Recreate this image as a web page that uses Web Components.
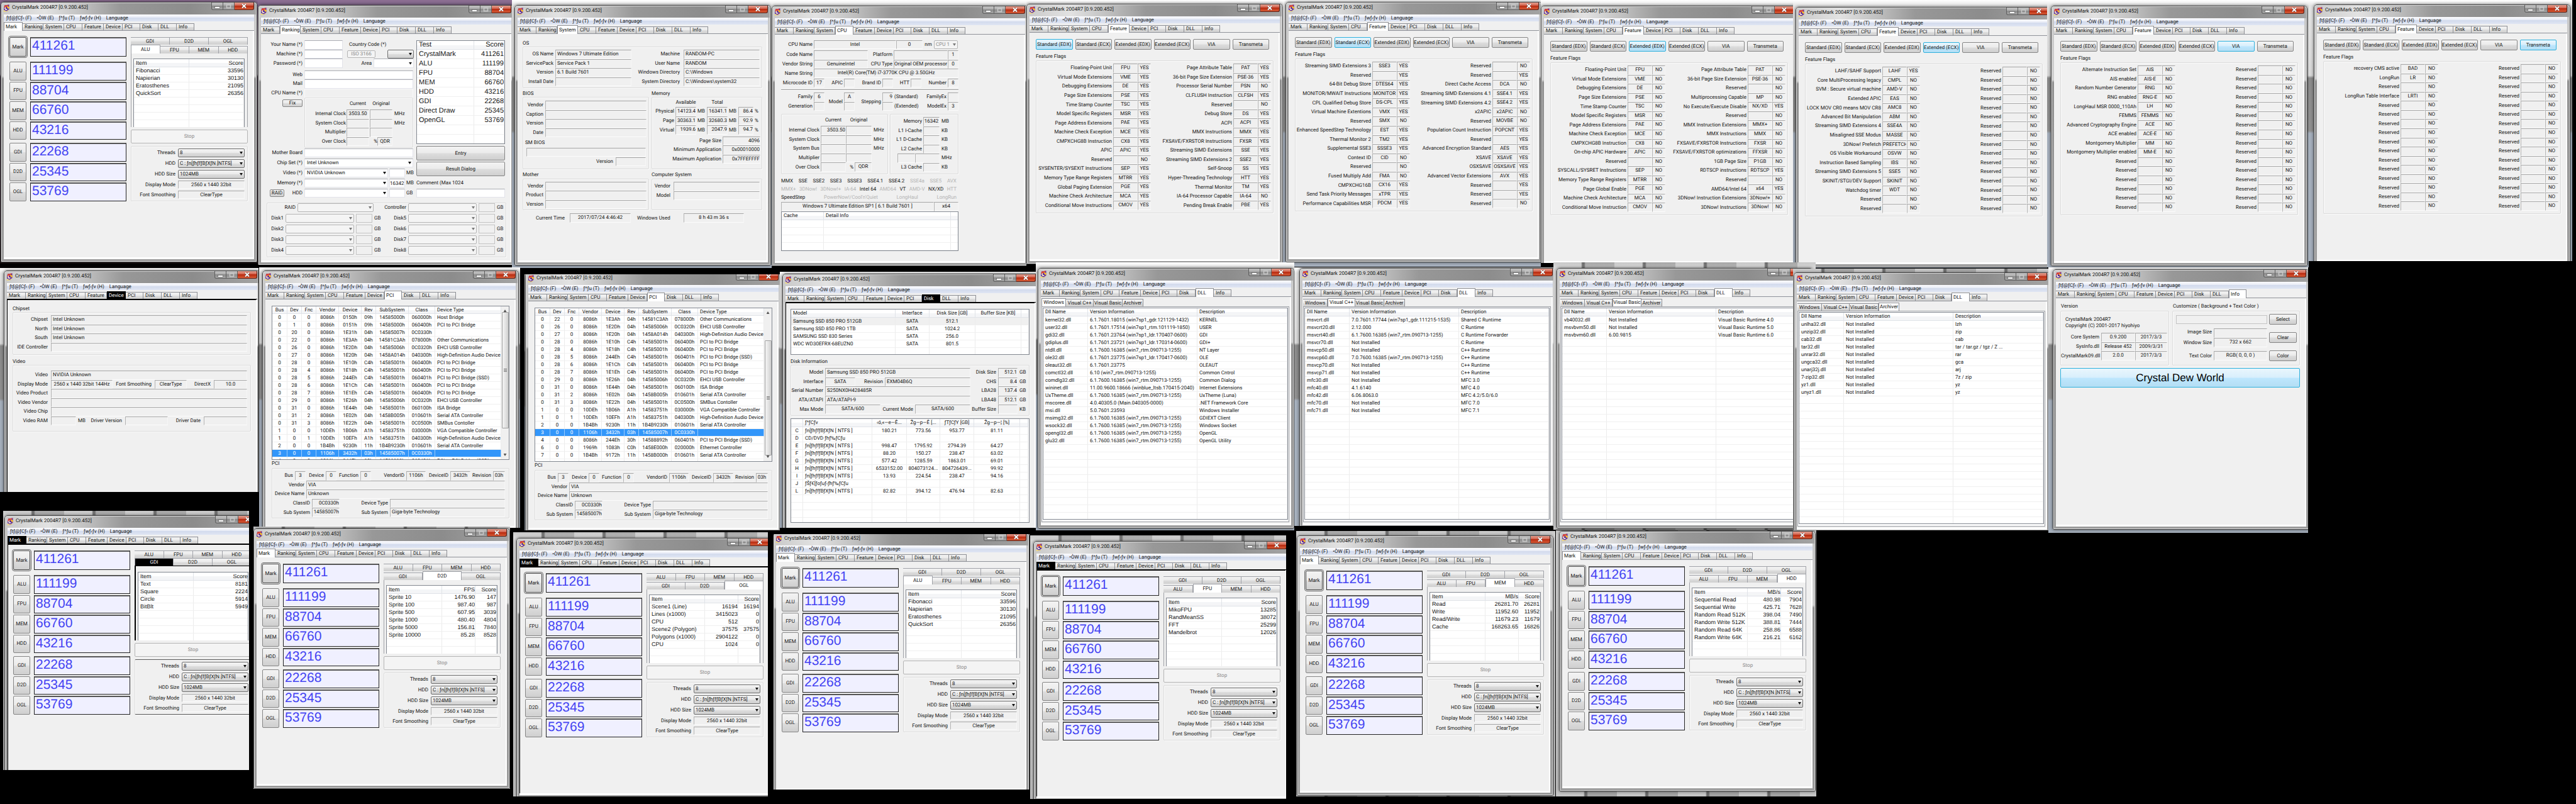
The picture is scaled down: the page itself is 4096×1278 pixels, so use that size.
<!DOCTYPE html>
<html lang="en">
<head>
<meta charset="utf-8">
<title>CrystalMark 2004R7</title>
<style>
html,body{margin:0;background:#000}
body{font:8px/12px Roboto,"Liberation Sans",sans-serif;color:#141414;text-rendering:geometricPrecision}
</style>
</head>
<body>
<crystal-desktop>
  <desk-shot class="purple" style="--x:0;--y:0;--w:410;--h:419;--dx:1;--dy:3"><cm-window tab="Mark"><mark-panel view="ALU"></mark-panel></cm-window></desk-shot>
  <desk-shot class="purple" style="--x:410;--y:0;--w:404;--h:421;--dx:0;--dy:8"><cm-window tab="Ranking"><ranking-panel></ranking-panel></cm-window></desk-shot>
  <desk-shot style="--x:814;--y:0;--w:413;--h:426;--dx:4;--dy:8"><cm-window tab="System"><system-panel></system-panel></cm-window></desk-shot>
  <desk-shot style="--x:1227;--y:0;--w:405;--h:423;--dx:0;--dy:9"><cm-window tab="CPU"><cpu-panel></cpu-panel></cm-window></desk-shot>
  <desk-shot style="--x:1632;--y:0;--w:408;--h:420;--dx:0;--dy:6"><cm-window tab="Feature"><feature-panel page="0"></feature-panel></cm-window></desk-shot>
  <desk-shot style="--x:2040;--y:0;--w:410;--h:424;--dx:4;--dy:3"><cm-window tab="Feature"><feature-panel page="1"></feature-panel></cm-window></desk-shot>
  <desk-shot style="--x:2450;--y:0;--w:401;--h:418;--dx:0;--dy:9"><cm-window tab="Feature"><feature-panel page="2"></feature-panel></cm-window></desk-shot>
  <desk-shot style="--x:2851;--y:0;--w:404;--h:426;--dx:4;--dy:11"><cm-window tab="Feature"><feature-panel page="3"></feature-panel></cm-window></desk-shot>
  <desk-shot style="--x:3255;--y:0;--w:416;--h:425;--dx:6;--dy:9"><cm-window tab="Feature"><feature-panel page="4"></feature-panel></cm-window></desk-shot>
  <desk-shot style="--x:3671;--y:0;--w:419;--h:415;--dx:8;--dy:7"><cm-window tab="Feature"><feature-panel page="5"></feature-panel></cm-window></desk-shot>

  <desk-shot style="--x:0;--y:426;--w:411;--h:356;--dx:6;--dy:4"><cm-window tab="Device" dark><device-panel></device-panel></cm-window></desk-shot>
  <desk-shot style="--x:412;--y:425;--w:415;--h:414;--dx:5;--dy:5"><cm-window tab="PCI"><pci-panel list="pci"></pci-panel></cm-window></desk-shot>
  <desk-shot style="--x:834;--y:436;--w:406;--h:407;--dx:1;--dy:-3"><cm-window tab="PCI"><pci-panel list="pciEnd"></pci-panel></cm-window></desk-shot>
  <desk-shot style="--x:1240;--y:432;--w:407;--h:407;--dx:4;--dy:3"><cm-window tab="Disk" dark><disk-panel></disk-panel></cm-window></desk-shot>
  <desk-shot style="--x:1647;--y:417;--w:411;--h:426;--dx:3;--dy:9"><cm-window tab="DLL"><dll-panel view="Windows"></dll-panel></cm-window></desk-shot>
  <desk-shot style="--x:2058;--y:425;--w:412;--h:411;--dx:8;--dy:1"><cm-window tab="DLL"><dll-panel view="Visual C++"></dll-panel></cm-window></desk-shot>
  <desk-shot class="noise" style="--x:2470;--y:417;--w:417;--h:425;--dx:5;--dy:9"><cm-window tab="DLL"><dll-panel view="Visual Basic"></dll-panel></cm-window></desk-shot>
  <desk-shot class="noise" style="--x:2851;--y:427;--w:406;--h:416;--dx:1;--dy:6"><cm-window tab="DLL"><dll-panel view="Archiver"></dll-panel></cm-window></desk-shot>
  <desk-shot style="--x:3257;--y:425;--w:413;--h:422;--dx:7;--dy:3"><cm-window tab="Info"><info-panel></info-panel></cm-window></desk-shot>

  <desk-shot class="noise" style="--x:5;--y:812;--w:391;--h:412;--dx:2;--dy:7"><cm-window tab="Mark" dark><mark-panel view="GDI" dark></mark-panel></cm-window></desk-shot>
  <desk-shot class="noise" style="--x:403;--y:837;--w:408;--h:417;--dx:0;--dy:3"><cm-window tab="Mark"><mark-panel view="D2D"></mark-panel></cm-window></desk-shot>
  <desk-shot class="noise" style="--x:816;--y:846;--w:405;--h:420;--dx:5;--dy:9"><cm-window tab="Mark" dark><mark-panel view="OGL"></mark-panel></cm-window></desk-shot>
  <desk-shot class="noise" style="--x:1230;--y:849;--w:407;--h:406;--dx:-1;--dy:-2"><cm-window tab="Mark"><mark-panel view="ALU"></mark-panel></cm-window></desk-shot>
  <desk-shot class="noise" style="--x:1638;--y:851;--w:407;--h:419;--dx:5;--dy:9"><cm-window tab="Mark" dark><mark-panel view="FPU"></mark-panel></cm-window></desk-shot>
  <desk-shot class="noise" style="--x:2061;--y:844;--w:412;--h:422;--dx:1;--dy:7"><cm-window tab="Mark"><mark-panel view="MEM"></mark-panel></cm-window></desk-shot>
  <desk-shot class="noise" style="--x:2474;--y:843;--w:414;--h:423;--dx:5;--dy:1"><cm-window tab="Mark"><mark-panel view="HDD"></mark-panel></cm-window></desk-shot>
</crystal-desktop>

<script>
/* ---------- shared styles ---------- */
const BASE = `
:host,*{box-sizing:border-box}
button,input,select{font:inherit;color:inherit;margin:0;padding:0;min-width:0;border-radius:0;outline-width:0;text-rendering:inherit}
button{background:linear-gradient(#f3f3f3,#ebebeb 48%,#dddddd 52%,#cfcfcf);border:1px solid #858585;border-radius:2px;text-align:center;line-height:10px;white-space:nowrap;overflow:hidden}
button.on{background:linear-gradient(#e9f6fd,#d8effc 48%,#bde6fd 52%,#b4def4);border-color:#2cb0dd}
button:disabled{background:#f4f4f4;border-color:#b5b5b5;color:#8a8a8a}
input{background:#fff;border:1px solid #e2e3ea;border-top-color:#abadb3;width:100%;height:100%;padding:0 2px}
input:disabled{background:#f0f0f0;border-color:#c4c4c4}
.sel{display:grid;align-items:center;min-width:0;height:100%}
.sel>*{grid-area:1/1}
.sel::after{content:"";grid-area:1/1;justify-self:end;margin-right:3px;width:5px;height:4px;background:#111;clip-path:polygon(0 0,100% 0,50% 100%);pointer-events:none}
select{appearance:none;width:100%;height:100%;border:1px solid #707070;border-radius:2px;padding:0 8px 0 2px;background:linear-gradient(#f3f3f3,#ebebeb 48%,#dddddd 52%,#cfcfcf)}
.sel.w select{background:#fff;border:1px solid #e2e3ea;border-top-color:#abadb3;border-radius:0;padding-left:3px}
.sel.d select{background:#f4f4f4;border-color:#b5b5b5;color:#8a8a8a;opacity:1}
.sel.d::after{background:#777}
.f{display:block;min-width:0;overflow:hidden;white-space:nowrap;border:1px solid #fcfcfc;border-top-color:#a6a6a6;border-left-color:#b4b4b4;border-right-color:#f6f6f6;padding:0 2px;line-height:12px}
.c{text-align:center;padding:0}
.r{text-align:right;padding:0}
.l{text-align:right;align-self:center;white-space:nowrap;min-width:0}
.n{align-self:center;white-space:nowrap;min-width:0}
.h{margin:0;font:inherit;line-height:10px;height:10px;white-space:nowrap}
.g{border:1px solid #dcdcdc;border-radius:2px;box-shadow:inset 1px 1px #fafafa,1px 1px #fafafa;min-width:0}
.rows{display:grid;grid-auto-rows:1fr}
.row{display:grid;min-width:0}
`;
class Panel extends HTMLElement{
  connectedCallback(){
    if(!this.shadowRoot) this.attachShadow({mode:'open'});
    this.shadowRoot.innerHTML = `<style>${BASE}:host{display:block}${this.css()}</style>${this.html()}`;
  }
  css(){return ''}
  html(){return '<slot></slot>'}
}
const f=(t='',c='')=>`<span class="f ${c}">${t}</span>`;
const l=t=>`<span class="l">${t}</span>`;
const n=t=>`<span class="n">${t}</span>`;

/* ---------- desktop ---------- */
customElements.define('crystal-desktop',class extends Panel{
  css(){return ':host{position:relative;min-height:100vh;background:#000;overflow:hidden}'}
});
customElements.define('desk-shot',class extends Panel{
  css(){return `
:host{position:absolute;left:calc(var(--x)*1px);top:calc(var(--y)*1px);width:calc(var(--w)*1px);height:calc(var(--h)*1px);overflow:hidden;
 background:linear-gradient(#fff,#e4e4e4 9px,#d9d9d9 120px,#8b8b8b 124px,#909090 208px,#a6b0bd 212px)}
:host(.purple){background:linear-gradient(#8d6f93,#7a6285 12px,#b7a9bd 60px,#cfcbd3 118px,#4d3d50 122px,#3d2c36 360px,#140d0e 415px)}
:host(.noise){background:repeating-linear-gradient(90deg,rgba(255,255,255,.5) 0 44px,rgba(70,70,70,.5) 46px 49px,rgba(200,200,200,.4) 51px 97px),linear-gradient(#8e8e8e,#b4b4b4 8px,#8b8b8b 100%)}
.in{display:flow-root;margin:calc(var(--dy)*1px) 0 0 calc(var(--dx)*1px)}`}
  html(){return '<div class="in"><slot></slot></div>'}
});

/* ---------- application window ---------- */
const TABS=[['Mark',30],['Ranking',33],['System',33],['CPU',29],['Feature',34],['Device',30],['PCI',28],['Disk',29],['DLL',29],['Info',28]];
customElements.define('cm-window',class extends Panel{
  css(){return `
:host{display:flex;flex-direction:column;width:408px;height:414px;padding:0 5px 5px;border-radius:5px 5px 2px 2px;
 background:linear-gradient(90deg,#c9c9c9 0,#e2e2e2 70px,#bdbdbd 135px,#989898 190px,#8c8c8c 300px,#a4a4a4 100%) 0 0/100% 20px no-repeat,linear-gradient(#c5c5c5,#cfcfcf 118px,#8e8e8e 122px,#9b9b9b);
 box-shadow:inset 0 0 0 1px #454545,inset 0 0 0 2px #dcdcdc,0 0 5px rgba(0,0,0,.6);overflow:hidden}
header{display:flex;height:20px;flex:none;align-items:flex-start}
header svg.ic{width:11px;height:12px;margin:4px 2px 0 -1px;flex:none}
h1{flex:1;margin:3px 0 0 1px;font-size:8px;font-weight:400;line-height:12px;white-space:nowrap;color:#101010}
.cap{display:flex;margin-top:1px}
.cap button{height:12px;border:1px solid #5e5e5e;border-top:0;border-radius:0;display:grid;place-items:center;background:linear-gradient(#c3c3c3,#adadad 45%,#8b8b8b 50%,#a5a5a5)}
.cap .a{width:19px;border-bottom-left-radius:3px}.cap .b{width:18px;border-left:0}
.cap .x{width:31px;border-left:0;border-color:#5b2017;border-bottom-right-radius:3px;background:linear-gradient(#e3a091,#d2604a 45%,#b92c12 50%,#d75a35)}
.cap svg{display:block}
nav{display:flex;gap:8px;flex:none;height:11px;padding-left:4px;background:linear-gradient(#fdfdff,#e6eaf5 45%,#d3dbed 50%,#dfe5f3)}
nav button{background:none;border:0;border-radius:0;line-height:11px;overflow:visible}
.tabs{display:flex;align-items:flex-end;flex:none;height:15px;background:#f0f0f0;border-bottom:1px solid #8f9299}
.tabs button{height:11px;border:1px solid #8c8e94;border-left-width:0;border-bottom:0;border-radius:0;text-align:left;padding:0 0 0 3px;line-height:10px;background:linear-gradient(#f2f2f2,#ebebeb 48%,#dddddd 52%,#cfcfcf)}
.tabs button[aria-selected=true]{height:14px;margin-bottom:-1px;background:#fff;line-height:11px;border-left-width:1px;padding-left:2px}
:host([dark]) .tabs{border-bottom:1px solid #000}
:host([dark]) .tabs button[aria-selected=true]{background:#000;color:#fff;border-color:#000;height:12px;margin:0}
main{flex:1;min-height:0;background:#f0f0f0;border:solid #fff;border-width:0 2px 3px 0;overflow:hidden}
:host([dark]) main{box-shadow:inset 1px 1px #000}`}
  html(){
    const cur=this.getAttribute('tab');
    return `<header>
<svg class="ic" viewBox="0 0 22 24"><path d="M4 3 19 1v15l-9 5-8-4z" fill="#4b1fa8"/><path d="M4 3 19 1l-7 7-9 4z" fill="#d8463a"/><path d="M2 17c2 4 8 6 12 5l4-7-6-5 1-5 7 3-2 9-8 5z" fill="#f4b92e"/><path d="M8 8a5 5 0 1 0 6 7l-3-1a2 2 0 1 1-2-4z" fill="#fff4c4"/><path d="m1 19 5 1 4 4H1z" fill="#e8d48a"/></svg>
<h1>CrystalMark 2004R7 [0.9.200.452]</h1>
<div class="cap"><button class="a" aria-label="Minimize"><svg width="9" height="8"><rect x=".5" y="4.500" width="8" height="3" fill="#fff" stroke="#555" stroke-width=".6"/></svg></button><button class="b" aria-label="Maximize"><svg width="9" height="8"><rect x="1.500" y="1.500" width="6" height="5" fill="none" stroke="#c9c9c9" stroke-width="1.500"/></svg></button><button class="x" aria-label="Close"><svg width="10" height="9"><path d="m2 1.500 6 6m0-6-6 6" stroke="#5d3a35" stroke-width="3"/><path d="m2 1.500 6 6m0-6-6 6" stroke="#fff" stroke-width="1.800"/></svg></button></div></header>
<nav>${['ƒtƒ@ƒCƒ‹ (F)','•ÒW (E)','ƒ^ƒu (T)','ƒwƒ‹ƒv (H)','Language'].map(t=>`<button>${t}</button>`).join('')}</nav>
<div class="tabs" role="tablist">${TABS.map(([t,w])=>`<button role="tab" aria-selected="${t===cur}" style="width:${w}px">${t}</button>`).join('')}</div>
<main><slot></slot></main>`}
});

/* ---------- list view ---------- */
const HD='ƒn[ƒhƒfƒBƒXƒN [ NTFS ]', NI='Not Installed', W7='6.1.7600.16385 (win7_rtm.090713-1255)';
const PCI=`0|0|0|8086h|0150h|09h|14585000h|060000h|Host Bridge
0|1|0|8086h|0151h|09h|14585000h|060400h|PCI to PCI Bridge
0|20|0|8086h|1E31h|04h|14585007h|0C0330h|
0|22|0|8086h|1E3Ah|04h|14581C3Ah|078000h|Other Communications
0|26|0|8086h|1E2Dh|04h|14585006h|0C0320h|EHCI USB Controller
0|27|0|8086h|1E20h|04h|1458A014h|040300h|High-Definition Audio Device
0|28|0|8086h|1E10h|C4h|14585001h|060400h|PCI to PCI Bridge
0|28|4|8086h|1E18h|C4h|14585001h|060400h|PCI to PCI Bridge
0|28|5|8086h|244Eh|C4h|14585001h|060401h|PCI to PCI Bridge (SSD)
0|28|6|8086h|1E1Ch|C4h|14585001h|060400h|PCI to PCI Bridge
0|28|7|8086h|1E1Eh|C4h|14585001h|060400h|PCI to PCI Bridge
0|29|0|8086h|1E26h|04h|14585006h|0C0320h|EHCI USB Controller
0|31|0|8086h|1E44h|04h|14585001h|060100h|ISA Bridge
0|31|2|8086h|1E02h|04h|1458B005h|010601h|Serial ATA Controller
0|31|3|8086h|1E22h|04h|14585001h|0C0500h|SMBus Contoller
1|0|0|10DEh|1B06h|A1h|14583751h|030000h|VGA Compatible Controller
1|0|1|10DEh|10EFh|A1h|14583751h|040300h|High-Definition Audio Device
2|0|0|1B4Bh|9230h|11h|1B4B9230h|010601h|Serial ATA Controller
3|0|0|1106h|3432h|03h|14585007h|0C0330h|
4|0|0|8086h|244Eh|30h|14588892h|060401h|PCI to PCI Bridge (SSD)
6|0|0|1969h|1083h|C0h|1458E000h|020000h|Ethernet Controller
7|0|0|1B4Bh|9172h|11h|1458B000h|010601h|Serial ATA Controller`.split('\n').map(r=>r.split('|'));
const two={cols:[88,87],al:'lr',fs:9,n:8}, three={cols:[88,53,34],al:'lrr',fs:9,n:8};
const pciBase={cols:[24,23,23,36,36,23,52,42,105],al:'ccccccccl',hh:12,head:['Bus','Dev','Fnc','Vendor','Device','Rev','SubSystem','Class','Device Type']};
const dll={cols:[71,174,143],al:'lll',head:['Dll Name','Version Information','Description'],n:28};
const split=(s,k='|')=>s.trim().split('\n').map(r=>r.split(k));
const LISTS={
ALU:{...two,head:['Item','Score'],rows:split('Fibonacci|33596\nNapierian|30130\nEratosthenes|21095\nQuickSort|26356')},
FPU:{...two,head:['Item','Score'],rows:split('MikoFPU|13285\nRandMeanSS|38072\nFFT|25299\nMandelbrot|12026')},
GDI:{...two,head:['Item','Score'],rows:split('Text|8181\nSquare|2224\nCircle|5914\nBitBlt|5949')},
D2D:{...three,head:['Item','FPS','Score'],rows:split('Sprite   10|1476.90|147\nSprite  100|987.40|987\nSprite  500|607.95|3039\nSprite  1000|480.40|4804\nSprite  5000|156.81|7840\nSprite 10000|85.28|8528')},
OGL:{...three,head:['Item','','Score'],rows:split('Scene1 (Line)|16194|16194\nLines (x1000)|3415023|0\nCPU|512|0\nScene2 (Polygon)|37575|37575\nPolygons (x1000)|2904122|0\nCPU|1024|0')},
MEM:{...three,head:['Item','MB/s','Score'],rows:split('Read|26281.70|26281\nWrite|11952.60|11952\nRead/Write|11679.23|11679\nCache|168263.65|16826')},
HDD:{...three,head:['Item','MB/s','Score'],rows:split('Sequential Read|480.98|7904\nSequential Write|425.71|7628\nRandom Read 512K|398.04|7490\nRandom Write 512K|388.81|7444\nRandom Read 64K|258.86|6588\nRandom Write 64K|216.21|6162')},
rank:{cols:[91,48],al:'lr',fs:11,n:11,tall:1,hh:14,head:['Test','Score'],rows:split('CrystalMark|411261\nALU|111199\nFPU|88704\nMEM|66760\nHDD|43216\nGDI|22268\nDirect Draw|25345\nOpenGL|53769')},
cache:{cols:[67,202,12],al:'lll',n:5,head:['Cache','Detail Info',''],rows:[]},
pci:{...pciBase,rows:PCI.slice(0,20),sel:18,scroll:'0 0 40px',n:20},
pciEnd:{...pciBase,rows:PCI.slice(3),sel:15,scroll:'42px 0 0',n:20},
disk:{cols:[166,54,73,73,12],al:'lcccl',n:6,hot:0,head:['Model','Interface','Disk Size [GB]','Buffer Size [KB]',''],rows:split('Samsung SSD 850 PRO 512GB|SATA|512.1||\nSamsung SSD 850 PRO 1TB|SATA|1024.2||\nSAMSUNG SSD 830 Series|SATA|256.0||\nWDC WD30EFRX-68EUZN0|SATA|801.5||')},
drives:{cols:[19,110,55,53,54,73,13],al:'clccccl',n:13,head:['','ƒ^ƒCƒv','‹ó‚«—e—Ê...','Žg—p—Ê [...','ƒTƒCƒY [GB]','Žg—p—¦ [%]',''],rows:[
['C',HD,'180.21','773.56','953.77','81.11',''],['D','CD/DVD ƒhƒ‰ƒCƒu','','','','',''],['E',HD,'998.47','1795.92','2794.39','64.27',''],['F',HD,'88.20','150.27','238.47','63.02',''],['G',HD,'577.42','1285.59','1863.01','69.01',''],['H',HD,'6533152.00','804073124...','804726439...','99.92',''],['I',HD,'13.93','224.54','238.47','94.16',''],['J','ƒŠƒ€[ƒoƒuƒ‹ƒhƒ‰ƒCƒu','','','','',''],['L',HD,'82.82','394.12','476.94','82.63','']]},
'Windows':{...dll,rows:[['kernel32.dll','6.1.7601.18015 (win7sp1_gdr.121129-1432)','KERNEL'],['user32.dll','6.1.7601.17514 (win7sp1_rtm.101119-1850)','USER'],['gdi32.dll','6.1.7601.23764 (win7sp1_ldr.170407-0600)','GDI'],['gdiplus.dll','6.1.7601.23721 (win7sp1_ldr.170314-0600)','GDI+'],['ntdll.dll',W7,'NT Layer'],['ole32.dll','6.1.7601.23775 (win7sp1_ldr.170417-0600)','OLE'],['oleaut32.dll','6.1.7601.23775','OLEAUT'],['comctl32.dll','6.10 (win7_rtm.090713-1255)','Common Cntrol'],['comdlg32.dll',W7,'Common Dialog'],['wininet.dll','11.00.9600.18666 (winblue_ltsb.170415-2040)','Internet Extensions'],['UxTheme.dll',W7,'UxTheme (Luna)'],['mscoree.dll','4.0.40305.0 (Main.040305-0000)','.NET Framework Core'],['msi.dll','5.0.7601.23593','Windows Installer'],['msimg32.dll',W7,'GDIEXT Client'],['wsock32.dll',W7,'Windows Socket'],['opengl32.dll',W7,'OpenGL'],['glu32.dll',W7,'OpenGL Utility']]},
'Visual C++':{...dll,rows:[['msvcrt.dll','7.0.7601.17744 (win7sp1_gdr.111215-1535)','Shared C Runtime'],['msvcrt20.dll','2.12.000','C Runtime'],['msvcrt40.dll',W7,'C Runtime Forwarder'],['msvcr70.dll',NI,'C Runtime'],['msvcp50.dll',NI,'C++ Runtime'],['msvcp60.dll','7.0.7600.16385 (win7_rtm.090713-1255)','C++ Runtime'],['msvcp70.dll',NI,'C++ Runtime'],['msvcp71.dll',NI,'C++ Runtime'],['mfc30.dll',NI,'MFC 3.0'],['mfc40.dll','4.1.6140','MFC 4.0'],['mfc42.dll','6.06.8063.0','MFC 4.2/5.0/6.0'],['mfc70.dll',NI,'MFC 7.0'],['mfc71.dll',NI,'MFC 7.1']]},
'Visual Basic':{...dll,rows:[['vb40032.dll',NI,'Visual Basic Runtime 4.0'],['msvbvm50.dll',NI,'Visual Basic Runtime 5.0'],['msvbvm60.dll','6.00.9815','Visual Basic Runtime 6.0']]},
'Archiver':{...dll,rows:[['unlha32.dll','lzh'],['unzip32.dll','zip'],['cab32.dll','cab'],['tar32.dll','tar / tar.gz / tgz / Z ...'],['unrar32.dll','rar'],['ungca32.dll','gca'],['unarj32j.dll','arj'],['7-zip32.dll','7z / zip'],['yz1.dll','yz'],['unyz1.dll','yz']].map(r=>[r[0],NI,r[1]])}
};
customElements.define('list-view',class extends Panel{
  get m(){return LISTS[this.getAttribute('src')]}
  css(){const m=this.m,hh=m.hh||13;return `
:host{display:flex;overflow:hidden;background:#fff;border:1px solid #828790;min-height:0;min-width:0}
.v{flex:1;overflow:hidden;min-width:0}
table{border-collapse:separate;border-spacing:0;table-layout:fixed;width:${m.cols.reduce((a,b)=>a+b)}px;font-family:${m.fs?'"Liberation Sans",':''}Roboto,sans-serif;font-size:${m.fs||8}px}
th,td{padding:0 4px 0 3px;height:${m.tall?15:12}px;line-height:${m.tall?14:11}px;font-weight:400;white-space:pre;overflow:hidden;border-right:1px solid #ececec;border-bottom:1px solid #f0f0f0}
th{height:${hh}px;background:linear-gradient(#fff 50%,#f4f5f7 52%);border-color:#e0e3e8;line-height:${hh-1}px}
.l{text-align:left}.r{text-align:right}.c{text-align:center;padding:0}
.s td{background:#3296fa;color:#fff;border-right-color:#9ccbfb}
.o td{background:#f0f0f0}
.b{flex:none;width:12px;background:#f0f0f0;display:flex;flex-direction:column;align-items:center;justify-content:space-between;padding:5px 0}
.b i{width:5px;height:4px;background:#555;clip-path:polygon(50% 0,100% 100%,0 100%)}
.b i:last-child{clip-path:polygon(0 0,100% 0,50% 100%)}
.b b{flex:1;width:11px;margin:${m.scroll||0};border:1px solid #a0a0a0;border-radius:1px;background:linear-gradient(90deg,#f3f3f3,#e4e4e4 50%,#cfcfcf);display:grid;place-items:center}
.b b::after{content:"";width:5px;height:5px;background:repeating-linear-gradient(#777 0 1px,transparent 1px 2px)}`}
  html(){const m=this.m,a=m.al,rows=[...m.rows];while(rows.length<m.n)rows.push(m.cols.map(()=>''));
    return `<div class="v"><table><colgroup>${m.cols.map(w=>`<col style="width:${w}px">`).join('')}</colgroup><thead><tr>${m.head.map((t,i)=>`<th class="${a[i]}">${t}</th>`).join('')}</tr></thead><tbody>${rows.map((r,k)=>`<tr class="${k===m.sel?'s':k===m.hot?'o':''}">${r.map((t,i)=>`<td class="${a[i]}">${t}</td>`).join('')}</tr>`).join('')}</tbody></table></div>${m.scroll?'<div class="b"><i></i><b></b><i></i></div>':''}`}
});

/* ---------- Mark ---------- */
customElements.define('mark-panel',class extends Panel{
  css(){return `
:host{display:grid;grid-template-columns:186px 186px;gap:7px;padding:10px 0 0 9px;align-items:start}
.grp{display:grid;grid-auto-rows:1fr;gap:2px}
.one{height:31px;margin-bottom:8px}.four{height:124px;margin-bottom:5px}.three{height:93px}
.sc{display:grid;grid-template-columns:27px 153px;gap:6px}
.one button{border-color:#444;outline:1px solid #666;outline-offset:1px}
output{display:block;background:#f0f0ff;border:1px solid #222;border-top:2px solid #555;color:#4343f2;font:21px/24px "Liberation Sans",sans-serif;padding-left:2px;overflow:hidden}
.tabs{display:grid;grid-auto-flow:column;grid-auto-columns:1fr;height:12px;align-items:end}
.tabs button{height:12px;border:1px solid #a0a2a8;border-bottom:0;border-left-width:0;border-radius:0}
.tabs button[aria-selected=true]{height:14px;background:#fff;border-left-width:1px;line-height:12px}
:host([dark]) .tabs button[aria-selected=true]{background:#000;color:#fff;height:12px}
.pg{border:1px solid #a0a2a8;border-bottom:0;padding:9px 4px 0 3px;height:119px;margin-bottom:4px}
:host([dark]) .pg{border-top:1px solid #000;border-left:2px solid #000}
list-view{height:109px;border-bottom:0}
.stop{width:100%;height:22px;margin-bottom:4px;display:block}
.g{height:88px;padding:3px 4px 3px 0;display:grid;grid-template-columns:69px 106px;grid-template-rows:14px 14px 14px 13px 13px;justify-content:end;row-gap:3px;column-gap:4px}
:host([dark]) .g{border-color:#555 #ddd}`}
  html(){
    const v=this.getAttribute('view'),A=['ALU','FPU','MEM','HDD'],B=['GDI','D2D','OGL'];
    const sc=([k,s])=>`<div class="sc"><button id="b${k}">${k}</button><output aria-labelledby="b${k}">${s}</output></div>`;
    const tabs=x=>`<div class="tabs" role="tablist">${x.map(t=>`<button role="tab" aria-selected="${t===v}">${t}</button>`).join('')}</div>`;
    return `<div><div class="grp one">${sc(['Mark',411261])}</div><div class="grp four">${[['ALU',111199],['FPU',88704],['MEM',66760],['HDD',43216]].map(sc).join('')}</div><div class="grp three">${[['GDI',22268],['D2D',25345],['OGL',53769]].map(sc).join('')}</div></div>
<div>${A.includes(v)?tabs(B)+tabs(A):tabs(A)+tabs(B)}<div class="pg"><list-view src="${v}"></list-view></div>
<button class="stop" disabled>Stop</button>
<div class="g"><label class="l" for="th">Threads</label><span class="sel"><select id="th"><option>8</option></select></span>
<label class="l" for="hd">HDD</label><span class="sel"><select id="hd"><option>C : ƒn[ƒhƒfƒBƒXƒN [NTFS]</option></select></span>
<label class="l" for="hs">HDD Size</label><span class="sel"><select id="hs"><option>1024MB</option></select></span>
${l('Display Mode')}${f('2560 x 1440 32bit','c')}${l('Font Smoothing')}${f('ClearType','c')}</div></div>`}
});

/* ---------- Ranking ---------- */
customElements.define('ranking-panel',class extends Panel{
  css(){return `
:host{padding:10px 0 0 9px}
.top{display:grid;grid-template-columns:233px 141px;gap:5px;height:258px}
.who{display:grid;grid-template-columns:57px 61px 110px;column-gap:3px;grid-template-rows:repeat(3,1fr);height:44px;margin-bottom:4px}
.cc{display:flex;align-items:center;min-width:0}
.cc label{white-space:nowrap}
.cc .iso{width:45px;height:12px;margin-left:4px;padding:0}
.cc .sel{width:42px;margin-left:auto}
.cc .area{width:64px}
.web{display:grid;grid-template-columns:57px 173px;column-gap:3px;grid-auto-rows:1fr;height:43px}
.web .f{border-color:#f8f8f8}
.clk{display:grid;grid-template-columns:57px 173px;column-gap:3px;height:80px;margin-bottom:1px}
.clk button{width:32px;height:12px;justify-self:end;margin-top:3px}
.clk .g{display:grid;grid-template-columns:65px 36px 36px 1fr;grid-template-rows:18px;grid-auto-rows:1fr;column-gap:1px;padding-bottom:2px}
.oc{display:grid;grid-template-columns:1fr 24px}
.hw{display:grid;grid-template-columns:57px 173px;column-gap:3px;grid-auto-rows:14px;row-gap:2px}
.hw .v{display:grid;grid-template-columns:133px 25px 11px;column-gap:2px}
.hw .v input{padding:0}
.raid{display:flex;justify-content:space-between;padding-left:5px;align-items:center}
.raid button{width:23px;height:12px}
.rt{display:flex;flex-direction:column}
.rt list-view{height:165px;margin-bottom:3px}
.rt button{height:23px;margin-bottom:2px;flex:none}
.rt label{line-height:18px;height:18px;flex:none;white-space:nowrap}
.rt input{height:14px;flex:none}
.arr{width:381px;height:87px;display:grid;grid-auto-rows:14px;row-gap:3px}
.arr .row{column-gap:3px}
.e1{grid-template-columns:45px 121px 1fr 109px 26px 14px}
.e2{grid-template-columns:26px 109px 26px 14px 1fr 109px 26px 14px}`}
  html(){
    const s=(id,o='',c='w')=>`<span class="sel ${c}"><select id="${id}" ${c==='d'?'disabled':''}><option>${o}</option></select></span>`;
    const lb=(id,t)=>`<label class="l" for="${id}">${t}</label>`;
    const di=t=>`<input disabled aria-label="${t}">`;
    return `<div class="top"><div>
<div class="who">${lb('nm','Your Name (*)')}<input id="nm"><div class="cc" style="padding-left:7px"><label for="iso">Country Code (*)</label></div>
${lb('mc','Machine (*)')}<input id="mc"><div class="cc"><button class="iso" disabled>ISO 3166</button><span class="sel"><select id="iso"><option></option></select></span></div>
${lb('pw','Password (*)')}<input id="pw"><div class="cc"><label class="l" for="ar" style="flex:1;margin-right:3px">Area</label><span class="sel w area"><select id="ar"><option></option></select></span></div></div>
<div class="web">${lb('wb','Web')}<input id="wb">${lb('ml','Mail')}<input id="ml">${l('CPU Name (*)')}${f()}</div>
<div class="clk"><button>Fix</button><div class="g"><span></span><span class="n" style="text-align:center">Current</span><span class="n" style="text-align:center">Original</span><span></span>
${l('Internal Clock')}${f('3503.50','c')}${f()}${n('&nbsp;MHz')}${l('System Clock')}${f()}${f()}${n('&nbsp;MHz')}${l('Multiplier')}${f()}${f()}<span></span>${l('Over Clock')}${f()}<span class="oc">${l('%')}${f('QDR','c')}</span><span></span></div></div>
<div class="hw">${lb('mb','Mother Board')}<input id="mb">${lb('cs','Chip Set (*)')}${s('cs','Intel Unknown')}
${lb('vi','Video (*)')}<div class="v">${s('vi','NVIDIA Unknown')}<input aria-label="Video MB">${n('MB')}</div>
${lb('me','Memory (*)')}<div class="v">${s('me')}<input aria-label="Memory MB" value="16342">${n('MB')}</div>
<div class="raid"><button>RAID</button>${lb('hdd','HDD')}</div><div class="v">${s('hdd')}<input aria-label="HDD GB">${n('GB')}</div></div></div>
<div class="rt"><list-view src="rank"></list-view><button>Entry</button><button>Result Dialog</button><label for="cm">Comment (Max 1024</label><input id="cm"></div></div>
<div class="g arr"><div class="row e1">${lb('rd','RAID')}${s('rd','','d')}${lb('ct','Controller')}${s('ct','','d')}${di('GB')}${n('GB')}</div>
${[1,2,3,4].map(i=>`<div class="row e2">${lb('k'+i,'Disk'+i)}${s('k'+i,'','d')}${di('GB')}${n('GB')}${lb('k'+(i+4),'Disk'+(i+4))}${s('k'+(i+4),'','d')}${di('GB')}${n('GB')}</div>`).join('')}</div>`}
});

/* ---------- System ---------- */
customElements.define('system-panel',class extends Panel{
  css(){return `
:host{padding:10px 0 0 8px;width:389px}
.os{height:66px;padding-top:4px;margin-bottom:4px}
.os .rows{height:58px;grid-template-columns:48px 121px 77px 121px;column-gap:3px}
.os .l:nth-child(4n+3){padding-right:3px}
.two{display:grid;grid-template-columns:201px 176px;column-gap:4px;margin-bottom:4px}
.mid .g{height:115px}.low .g{height:50px;padding-top:4px;margin-top:1px}
.bi .rows{height:58px;margin-top:5px;grid-template-columns:32px 161px;column-gap:3px}
.sm{height:17px;line-height:17px;padding-left:3px}
.smf{height:14px;margin:0 4px 1px 5px}
.ve{display:grid;grid-template-columns:1fr 48px;gap:4px;height:14px;margin-right:4px}
.me .hd{height:15px;display:grid;grid-template-columns:35px 33px 13px 33px;gap:2px;text-align:center;line-height:16px}
.me .mm{height:44px;grid-template-columns:35px 33px 13px 33px 13px 24px 1fr;column-gap:2px}
.me .pp{height:43px;margin-top:3px;grid-template-columns:110px 60px;column-gap:2px}
.low .mo{height:43px;grid-template-columns:32px 161px;column-gap:3px}
.low .co{height:29px;grid-template-columns:29px 137px;column-gap:5px}
.tm{display:grid;grid-template-columns:67px 97px 68px 96px;gap:8px;height:15px;margin-top:5px}`}
  html(){return `<h2 class="h">OS</h2><div class="g os"><div class="rows">${l('OS Name')}${f('Windows 7 Ultimate Edition')}${l('Machine')}${f('RANDOM-PC')}${l('ServicePack')}${f('Service Pack 1')}${l('User Name')}${f('RANDOM')}${l('Version')}${f('6.1 Build 7601')}${l('Windows Directory')}${f('C:\\Windows')}${l('Install Date')}${f()}${l('System Directory')}${f('C:\\Windows\\system32')}</div></div>
<div class="two mid"><div class="bi"><h2 class="h">BIOS</h2><div class="g"><div class="rows">${['Vendor','Caption','Version','Date'].map(t=>l(t)+f()).join('')}</div><div class="sm">SM BIOS</div><div class="f smf"></div><div class="ve">${l('Version')}${f()}</div></div></div>
<div class="me"><h2 class="h">Memory</h2><div class="g"><div class="hd"><span></span><span>Available</span><span></span><span>Total</span></div><div class="rows mm">${[['Physical','14123.4','16341.1','86.4'],['Page','30363.1','32680.3','92.9'],['Virtual','1939.6','2047.9','94.7']].map(r=>l(r[0])+f(r[1],'r')+n('MB')+f(r[2],'r')+n('MB')+f(r[3],'r')+n('%')).join('')}</div><div class="rows pp">${l('Page Size')}${f('4096','r')}${l('Minimum Application')}${f('0x00010000','r')}${l('Maximum Application')}${f('0x7FFEFFFF','r')}</div></div></div></div>
<div class="two low"><div><h2 class="h">Mother</h2><div class="g"><div class="rows mo">${['Vendor','Product','Version'].map(t=>l(t)+f()).join('')}</div></div></div><div><h2 class="h">Computer System</h2><div class="g"><div class="rows co">${['Vendor','Model'].map(t=>l(t)+f()).join('')}</div></div></div></div>
<div class="tm">${l('Current Time')}${f('2017/07/24 4:46:42','c')}${n('&nbsp;Windows Used')}${f('8 h 43 m 36 s','c')}</div>`}
});

/* ---------- CPU ---------- */
customElements.define('cpu-panel',class extends Panel{
  css(){return `
:host{padding:9px 0 0 10px;width:292px}
.l{padding-right:2px}
.a{grid-template-columns:52px 131px 42px 18px 38px;height:14px;margin-bottom:2px}
.a .n{text-align:center}
.three{height:44px;margin-bottom:1px}
.b{grid-template-columns:52px 86px 41px 86px 17px}.c4{grid-template-columns:52px 1fr}
.e{grid-template-columns:52px 17px 31px 17px 44px 17px 28px 17px 42px 17px;height:14px}
hr{border:0;border-top:1px solid #9a9a9a;border-bottom:1px solid #fff;height:2px;margin:3px 0 3px}
.m{grid-template-columns:52px 17px 31px 17px 44px 17px 45px 42px 17px;grid-template-rows:1fr 1fr;height:29px;margin-bottom:5px}
.m .t{grid-row:span 2}
.m .n{padding-left:2px}
.bx{display:grid;grid-template-columns:170px 109px;column-gap:3px;height:96px}
.k{display:grid;grid-template-columns:62px 40px 41px 1fr;grid-template-rows:18px;grid-auto-rows:1fr;padding-bottom:3px}
.k .n,.q .n{padding-left:3px}.k .hd{text-align:center;padding:0}
.oc{display:grid;grid-template-columns:1fr 27px}
.q{display:grid;grid-template-columns:52px 26px 1fr;grid-auto-rows:1fr;padding:4px 0 3px}
.q .p{grid-column:span 2;display:grid;grid-template-columns:28px 39px;justify-content:end}
.fl{display:flex;justify-content:space-between;height:13px;line-height:13px;white-space:nowrap}
.fl s{text-decoration:none;color:#b4b4b4}
.y{grid-template-columns:1fr 39px;height:15px}
list-view{height:63px}`}
  html(){
    const fl=s=>`<div class="fl">${s.split('|').map(t=>t[0]==='~'?`<s>${t.slice(1)}</s>`:`<span>${t}</span>`).join('')}</div>`;
    return `<div class="row a">${l('CPU Name')}${f('Intel','c')}${f('0','c')}${n('nm')}<span class="sel d"><select disabled aria-label="CPU"><option>CPU 1</option></select></span></div>
<div class="rows three"><div class="row b">${l('Code Name')}${f()}${l('Platform')}${f()}${f('1','c')}</div><div class="row b">${l('Vendor String')}${f('GenuineIntel','c')}${l('CPU Type')}${f('Original OEM processor','c')}${f('0','c')}</div><div class="row c4">${l('Name String')}${f('Intel(R) Core(TM) i7-3770K CPU @ 3.50GHz','c')}</div></div>
<div class="row e">${l('Microcode ID')}${f('17','c')}${l('APIC')}${f()}${l('Brand ID')}${f()}${l('HTT')}${f()}${l('Number')}${f('8','c')}</div><hr>
<div class="row m">${l('Family')}${f('6','c')}<span class="l t">Model</span>${f('A','c')}<span class="l t">Stepping</span>${f('9','r')}${n('(Standard)')}${l('FamilyEx')}${f()}${l('Generation')}${f()}${f()}${f()}${n('(Extended)')}${l('ModelEx')}${f('3','c')}</div>
<div class="bx"><div class="g k"><span></span><span class="n hd">Current</span><span class="n hd">Original</span><span></span>${l('Internal Clock')}${f('3503.50','r')}${f()}${n('MHz')}${l('System Clock')}${f()}${f()}${n('MHz')}${l('System Bus')}${f()}${f()}${n('MHz')}${l('Multiplier')}${f()}${f()}<span></span>${l('Over Clock')}${f()}<span class="oc">${l('%')}${f('QDR','c')}</span><span></span></div>
<div class="g q">${l('Memory')}${f('16342','c')}${n('MB')}${l('L1 I-Cache')}${f()}${n('KB')}${l('L1 D-Cache')}${f()}${n('KB')}${l('L2 Cache')}${f()}${n('KB')}<span class="p">${f()}${f()}</span>${n('MHz')}${l('L3 Cache')}${f()}${n('KB')}</div></div>
<div style="padding:4px 3px 1px 0">${fl('MMX|SSE|SSE2|SSE3|SSSE3|SSE4.1|SSE4.2|~SSE4a|~SSE5|~AVX')}${fl('~MMX+|~3DNow!|~3DNow!+|~IA-64|Intel 64|~AMD64|VT|~AMD-V|NX/XD|~HTT')}${fl("SpeedStep|~PowerNow!/Cool'n'Quiet|~LongHaul|~LongRun")}</div>
<div class="row y">${f('Windows 7 Ultimate Edition SP1 [ 6.1 Build 7601 ]','c')}${f('x64','c')}</div><list-view src="cache"></list-view>`}
});

/* ---------- Feature ---------- */
const R0='Reserved||NO';
const FEAT=[
`Floating-Point Unit|FPU|YES
Virtual Mode Extensions|VME|YES
Debugging Extensions|DE|YES
Page Size Extensions|PSE|YES
Time Stamp Counter|TSC|YES
Model Specific Registers|MSR|YES
Page Address Extensions|PAE|YES
Machine Check Exception|MCE|YES
CMPXCHG8B Instruction|CX8|YES
APIC|APIC|YES
Reserved||NO
SYSENTER/SYSEXIT Instructions|SEP|YES
Memory Type Range Registers|MTRR|YES
Global Paging Extension|PGE|YES
Machine Check Architecture|MCA|YES
Conditional Move Instructions|CMOV|YES
Page Attribute Table|PAT|YES
36-bit Page Size Extension|PSE-36|YES
Processor Serial Number|PSN|NO
CLFLUSH Instruction|CLFSH|YES
Reserved||NO
Debug Store|DS|YES
ACPI|ACPI|YES
MMX Instructions|MMX|YES
FXSAVE/FXRSTOR Instructions|FXSR|YES
Streaming SIMD Extensions|SSE|YES
Streaming SIMD Extensions 2|SSE2|YES
Self-Snoop|SS|YES
Hyper-Threading Technology|HTT|YES
Thermal Monitor|TM|YES
IA-64 Processor Capable|IA-64|NO
Pending Break Enable|PBE|YES`,
`Streaming SIMD Extensions 3|SSE3|YES
Reserved||YES
64-Bit Debug Store|DTES64|YES
MONITOR/MWAIT Instructions|MONITOR|YES
CPL Qualified Debug Store|DS-CPL|YES
Virtual Machine Extentions|VMX|YES
Reserved|SMX|NO
Enhanced SpeedStep Technology|EST|YES
Thermal Monitor 2|TM2|YES
Supplemental SSE3|SSSE3|YES
Context ID|CID|NO
Reserved||NO
Fused Multiply Add|FMA|NO
CMPXCHG16B|CX16|YES
Send Task Priority Messages|xTPR|YES
Performance Capabilities MSR|PDCM|YES
Reserved||NO
Reserved||YES
Direct Cache Access|DCA|NO
Streaming SIMD Extensions 4.1|SSE4.1|YES
Streaming SIMD Extensions 4.2|SSE4.2|YES
x2APIC|x2APIC|NO
Reserved|MOVBE|NO
Population Count Instruction|POPCNT|YES
Reserved||YES
Advanced Encryption Standard|AES|YES
XSAVE|XSAVE|YES
OSXSAVE|OSXSAVE|YES
Advanced Vector Extensions|AVX|YES
Reserved||YES
Reserved||YES
Reserved||NO`,
`Floating-Point Unit|FPU|NO
Virtual Mode Extensions|VME|NO
Debugging Extensions|DE|NO
Page Size Extensions|PSE|NO
Time Stamp Counter|TSC|NO
Model Specific Registers|MSR|NO
Page Address Extensions|PAE|NO
Machine Check Exception|MCE|NO
CMPXCHG8B Instruction|CX8|NO
On-chip APIC Hardware|APIC|NO
Reserved||NO
SYSCALL/SYSRET Instructions|SEP|NO
Memory Type Range Registers|MTRR|NO
Page Global Enable|PGE|NO
Machine Check Architecture|MCA|NO
Conditional Move Instruction|CMOV|NO
Page Attribute Table|PAT|NO
36-bit Page Size Extension|PSE-36|NO
Reserved||NO
Multiprocessing Capable|MP|NO
No Execute/Execute Disable|NX/XD|YES
Reserved||NO
MMX Instruction Extensions|MMX+|NO
MMX Instructions|MMX|NO
FXSAVE/FXRSTOR Instructions|FXSR|NO
FXSAVE/FXRSTOR optimizations|FFXSR|NO
1GB Page Size|P1GB|NO
RDTSCP instructions|RDTSCP|YES
Reserved||NO
AMD64/Intel 64|x64|YES
3DNow! Instruction Extensions|3DNow!+|NO
3DNow! Instructions|3DNow!|NO`,
`LAHF/SAHF Support|LAHF|YES
Core MultiProcessing legacy|CMPL|NO
SVM : Secure virtual machine|AMD-V|NO
Extended APIC|EAS|NO
LOCK MOV CR0 means MOV CR8|AMC8|NO
Advanced Bit Manipulation|ABM|NO
Streaming SIMD Extensions 4 AMD|SSE4A|NO
Misaligned SSE Modus|MASSE|NO
3DNow! Prefetch|PREFETCH|NO
OS Visible Workaround|OSVW|NO
Instruction Based Sampling|IBS|NO
Streaming SIMD Extensions 5|SSE5|NO
SKINIT/STGI/DEV Support|SKINIT|NO
Watchdog timer|WDT|NO`,
`Alternate Instruction Set|AIS|NO
AIS enabled|AIS-E|NO
Random Number Generator|RNG|NO
RNG enabled|RNG-E|NO
LongHaul MSR 0000_110Ah|LH|NO
FEMMS|FEMMS|NO
Advanced Cryptography Engine|ACE|NO
ACE enabled|ACE-E|NO
Montgomery Multiplier|MM|NO
Montgomery Multiplier enabled|MM-E|NO`,
`recovery CMS active|BAD|NO
LongRun|LR|NO
Reserved||NO
LongRun Table Interface|LRTI|NO`].map(s=>{const r=s.split('\n');while(r.length<32)r.push(R0);return r.map(x=>x.split('|'))});
customElements.define('feature-panel',class extends Panel{
  css(){return `
:host{padding:10px 0 0 10px;width:388px}
.bt{display:grid;grid-template-columns:repeat(6,1fr);gap:4px;height:17px;margin:0 7px 6px 0}
.h{margin-bottom:1px}
.g{height:243px;padding-top:4px}
.rows{height:233px;grid-template-columns:122px 39px 21px 1fr 39px 21px;padding-right:3px;grid-auto-rows:1fr}
.l{padding-right:2px}
.cut{white-space:normal;height:14px;line-height:12px;overflow:hidden;padding-left:14px}`}
  html(){const p=+this.getAttribute('page'),d=FEAT[p];let s='';
    for(let i=0;i<16;i++)for(const r of [d[i],d[i+16]])s+=(r[0].endsWith('4 AMD')?`<span class="l cut">${r[0]}</span>`:l(r[0]))+f(r[1],'c')+f(r[2],'c');
    return `<div class="bt">${['Standard (EDX)','Standard (ECX)','Extended (EDX)','Extended (ECX)','VIA','Transmeta'].map((t,i)=>`<button class="${i===p?'on':''}">${t}</button>`).join('')}</div><h2 class="h">Feature Flags</h2><div class="g"><div class="rows">${s}</div></div>`}
});

/* ---------- Device ---------- */
customElements.define('device-panel',class extends Panel{
  css(){return `
:host{padding:10px 0 0 9px;width:388px}
.g{padding:4px 5px 0 0}
.a{height:68px;margin-bottom:6px}.a .rows{height:58px}
.v{height:106px;padding-top:8px}.v .rows{height:87px}
.row{grid-template-columns:60px 1fr}
.l{padding-right:5px}
.p{grid-template-columns:60px 98px 67px 51px 43px 1fr}
.q{grid-template-columns:60px 40px 17px 61px 68px 57px 1fr}
.q .n{padding-left:3px}`}
  html(){const r=(a,b='')=>`<div class="row">${l(a)}${f(b)}</div>`;
    return `<h2 class="h">Chipset</h2><div class="g a"><div class="rows">${r('Chipset','Intel Unknown')}${r('North','Intel Unknown')}${r('South','Intel Unknown')}${r('IDE Controller')}</div></div>
<h2 class="h">Video</h2><div class="g v"><div class="rows">${r('Video','NVIDIA Unknown')}<div class="row p">${l('Display Mode')}${f('2560 x 1440 32bit 144Hz','c')}${l('Font Smoothing')}${f('ClearType','c')}${l('DirectX')}${f('10.0','c')}</div>${r('Video Product')}${r('Video Vendor')}${r('Video Chip')}<div class="row q">${l('Video RAM')}${f()}${n('MB')}${l('Driver Version')}${f()}${l('Driver Date')}${f()}</div></div></div>`}
});

/* ---------- PCI ---------- */
customElements.define('pci-panel',class extends Panel{
  css(){return `
:host{padding:10px 0 0 10px;width:388px}
list-view{height:245px;margin-bottom:1px}
.h{margin-bottom:2px}
.g{height:80px;padding:4px 6px 0 0}
.rows{height:73px}
.l{padding-right:3px}
.a{grid-template-columns:36px 17px 32px 17px 38px 17px 56px 31px 39px 32px 36px 1fr}
.b{grid-template-columns:54px 1fr}
.e{grid-template-columns:63px 44px 80px 1fr}`}
  html(){return `<list-view src="${this.getAttribute('list')}"></list-view><h2 class="h">PCI</h2><div class="g"><div class="rows"><div class="row a">${l('Bus')}${f('3','c')}${l('Device')}${f('0','c')}${l('Function')}${f('0','c')}${l('VendorID')}${f('1106h','c')}${l('DeviceID')}${f('3432h','c')}${l('Revision')}${f('03h','c')}</div><div class="row b">${l('Vendor')}${f('VIA')}</div><div class="row b">${l('Device Name')}${f('Unknown')}</div><div class="row e">${l('ClassID')}${f('0C0330h','r')}${l('Device Type')}${f()}</div><div class="row e">${l('Sub System')}${f('14585007h','r')}${l('Sub System')}${f('Giga-byte Technology')}</div></div></div>`}
});

/* ---------- Disk ---------- */
customElements.define('disk-panel',class extends Panel{
  css(){return `
:host{padding:10px 0 0 8px;width:388px}
.one{height:73px;margin-bottom:6px}.two{height:166px}
.g{height:81px;margin:0 0 4px;padding:4px 0 0}
.rows{height:73px}
.l{padding-right:3px}.n{padding-left:3px}
.a{grid-template-columns:54px 231px 44px 31px 1fr}
.b{grid-template-columns:54px 48px 47px 136px 44px 31px 1fr}
.e{grid-template-columns:54px 88px 55px 88px 44px 31px 1fr}`}
  html(){return `<list-view class="one" src="disk"></list-view><h2 class="h">Disk Information</h2><div class="g"><div class="rows">
<div class="row a">${l('Model')}${f('Samsung SSD 850 PRO 512GB')}${l('Disk Size')}${f('512.1','r')}${n('GB')}</div>
<div class="row b">${l('Interface')}${f('SATA','c')}${l('Revision')}${f('EXM04B6Q')}${l('CHS')}${f('8.4','r')}${n('GB')}</div>
<div class="row a">${l('Serial Number')}${f('S250NX0H428485R')}${l('LBA28')}${f('137.4','r')}${n('GB')}</div>
<div class="row a">${l('ATA/ATAPI')}${f('ATA/ATAPI-9')}${l('LBA48')}${f('512.1','r')}${n('GB')}</div>
<div class="row e">${l('Max Mode')}${f('SATA/600','c')}${l('Current Mode')}${f('SATA/600','c')}${l('Buffer Size')}${f('','r')}${n('KB')}</div></div></div><list-view class="two" src="drives"></list-view>`}
});

/* ---------- DLL ---------- */
customElements.define('dll-panel',class extends Panel{
  css(){return `
:host{padding:2px 1px 0 1px}
.t{display:flex;align-items:flex-end;height:13px}
.t button{height:12px;border:1px solid #8c8e94;border-left-width:0;border-bottom:0;border-radius:0;padding:0}
.t button[aria-selected=true]{background:#fff;height:13px;border-left-width:1px}
.p{border:1px solid #9a9da3;padding:1px;background:#fff;height:343px}
list-view{height:337px}`}
  html(){const v=this.getAttribute('view');return `<div class="t" role="tablist">${[['Windows',39],['Visual C++',44],['Visual Basic',46],['Archiver',33]].map(([t,w])=>`<button role="tab" style="width:${w}px" aria-selected="${t===v}">${t}</button>`).join('')}</div><div class="p"><list-view src="${v}"></list-view></div>`}
});

/* ---------- Info ---------- */
customElements.define('info-panel',class extends Panel{
  css(){return `
:host{padding:8px 0 0 7px;width:388px}
.t{display:grid;grid-template-columns:173px 203px;gap:5px;margin-bottom:4px}
.h{margin:0 0 2px 1px}
.g{height:87px}
p{margin:8px 0 6px 7px;line-height:10px}
.a{height:44px;grid-template-columns:64px 54px 51px}
.l{padding-right:3px}
.c2{display:grid;grid-template-columns:1fr 44px;gap:2px;padding:4px 4px 0 5px}
.k{display:grid;grid-template-columns:60px 85px;grid-template-rows:14px 22px 15px 6px 15px;padding-top:2px;align-content:start}
.k input{grid-column:span 2}
.k .i{margin-top:7px;height:15px}
.bt{display:grid;grid-template-rows:17px 17px 17px;row-gap:12px}
.big{width:100%;height:31px;font:17px/28px "Liberation Sans",sans-serif;color:#000}`}
  html(){return `<div class="t"><div><h2 class="h">Version</h2><div class="g"><p>CrystalMark 2004R7<br>Copyright (C) 2001-2017 hiyohiyo</p><div class="rows a">${l('Core System')}${f('0.9.200','c')}${f('2017/3/3','c')}${l('SysInfo.dll')}${f('Release 452','c')}${f('2009/3/31','c')}${l('CrystalMark09.dll')}${f('2.0.0','c')}${f('2017/3/3','c')}</div></div></div>
<div><h2 class="h">Customize ( Background + Text Color )</h2><div class="g c2"><div class="k"><input aria-label="Background" disabled><span class="l i">Image Size</span><span class="f i"></span>${l('Window Size')}${f('732 x 662','c')}<span></span><span></span>${l('Text Color')}${f('RGB( 0, 0, 0 )','c')}</div><div class="bt"><button>Select</button><button>Clear</button><button>Color</button></div></div></div></div><button class="big on">Crystal Dew World</button>`}
});
</script>
</body>
</html>
